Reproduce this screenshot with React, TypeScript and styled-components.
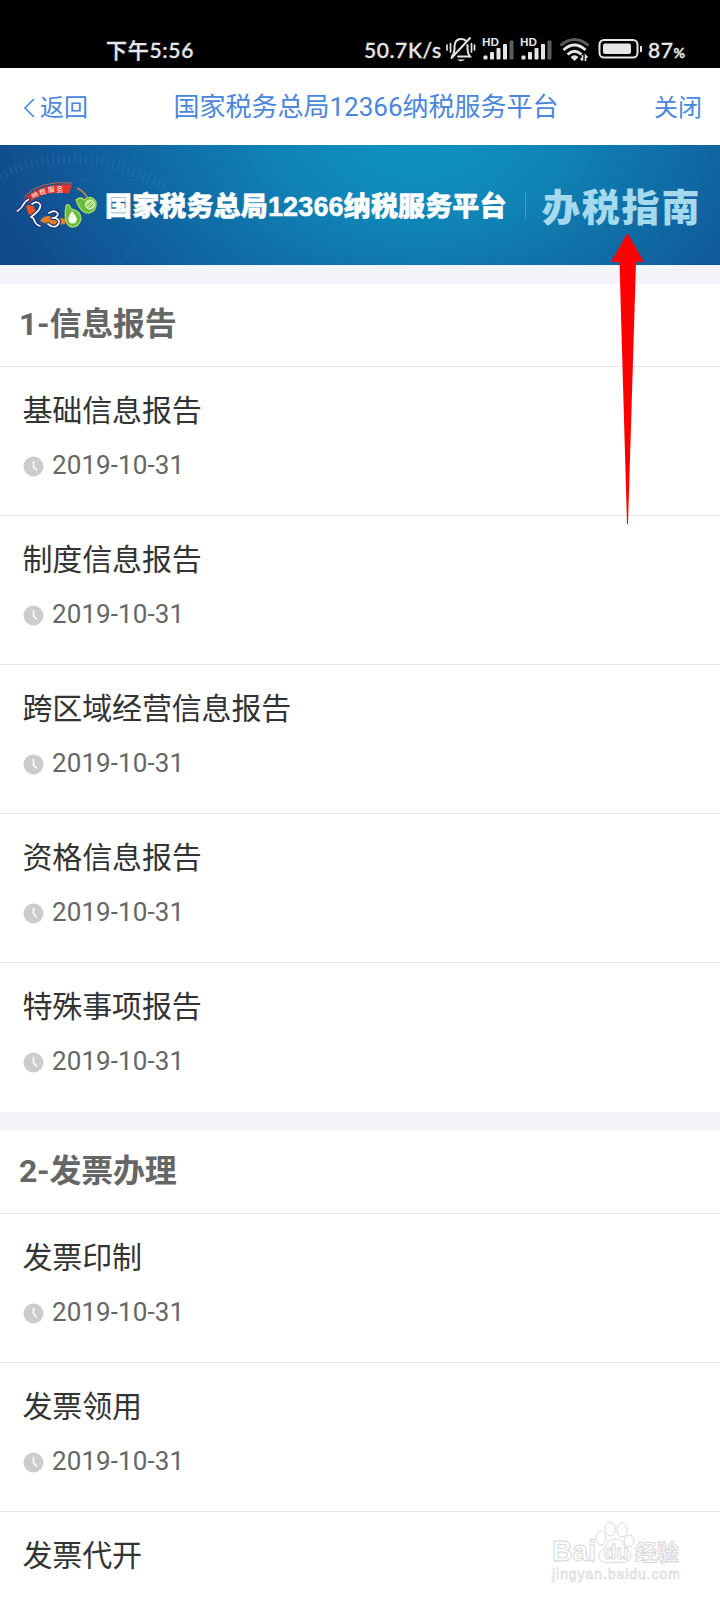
import React from "react";
import styled, { createGlobalStyle } from "styled-components";

const GlobalStyle = createGlobalStyle`
  * { box-sizing: border-box; }
  body { margin: 0; background: #fff; font-family: Roboto, "Noto Sans CJK SC", sans-serif; }
`;

const Screen = styled.div`
  position: relative;
  width: 720px;
  height: 1600px;
  overflow: hidden;
  background: #fff;
`;

const StatusBar = styled.header`
  display: flex;
  align-items: center;
  height: 68px;
  padding: 32px 35px 0 106px;
  background: #000;
  color: #e6e6e6;
  font-family: Lato, "Noto Sans CJK SC", sans-serif;
  font-size: 21px;
  white-space: nowrap;
  -webkit-text-stroke: 0.35px #e6e6e6;
`;

const Clock = styled.span`
  flex: 1;
  margin-top: -2px;
  letter-spacing: 0.7px;
  font-weight: 500;
`;

const Speed = styled.span`
  width: 82px;
  margin-top: -2px;
  font-weight: 500;
  letter-spacing: 0.6px;
`;

const Battery = styled.span`
  width: 37px;
  margin-top: -2px;
  font-weight: 500;
  letter-spacing: 0.5px;
  small { font-size: 14px; font-weight: 700; }
`;

const StatusIcons = styled.svg`
  display: block;
  width: 202px;
  height: 30px;
  flex: none;
  margin-top: 2px;
  -webkit-text-stroke: 0;
`;

const NavBar = styled.nav`
  display: flex;
  justify-content: space-between;
  align-items: center;
  height: 77px;
  padding: 0 18px 0 23px;
  color: #4a86dc;
  font-size: 24px;
  white-space: nowrap;
`;

const NavAction = styled.button`
  display: flex;
  align-items: center;
  gap: 5px;
  padding: 3px 0 0;
  border: 0;
  background: none;
  color: inherit;
  font: inherit;
  line-height: 36px;
`;

const NavTitle = styled.h1`
  margin: 1px 10px 0 0;
  font-size: 26px;
  font-weight: 400;
  line-height: 40px;
`;

const Banner = styled.section`
  position: relative;
  display: flex;
  align-items: center;
  height: 120px;
  padding-left: 14px;
  overflow: hidden;
  white-space: nowrap;
  background: radial-gradient(ellipse 450px 310px at 420px -20px, #0e95c2 0%, #0f84b6 32%, #106aa4 60%, #11488b 100%);
`;

const BannerRings = styled.svg`
  position: absolute;
  inset: 0;
  width: 720px;
  height: 120px;
`;

const BannerLogo = styled.svg`
  position: relative;
  flex: none;
  width: 91px;
  height: 60px;
`;

const BannerName = styled.div`
  position: relative;
  width: 402px;
  margin-top: 3px;
  color: #fff;
  font-family: "Liberation Sans", "Noto Sans CJK SC", sans-serif;
  font-size: 27px;
  font-weight: 900;
  line-height: 40px;
  letter-spacing: 0.15px;
  -webkit-text-stroke: 0.5px #fff;
`;

const BannerDivider = styled.div`
  width: 1px;
  height: 28px;
  margin: 0 16px 0 18px;
  background: #3d9cc8;
`;

const BannerTopic = styled.div`
  position: relative;
  color: #a5d9ee;
  font-family: "Noto Sans CJK SC", sans-serif;
  font-size: 38px;
  font-weight: 900;
  line-height: 56px;
  letter-spacing: 1.8px;
`;

const Group = styled.section`
  padding-bottom: 1px;
  border-top: 19px solid #f4f5fb;
`;

const GroupTitle = styled.h2`
  height: 82px;
  margin: 0;
  padding-left: 19px;
  color: #666;
  font-size: 32px;
  font-weight: 700;
  line-height: 80px;
  letter-spacing: -0.25px;
`;

const Entry = styled.article`
  height: 149px;
  padding: 21px 23px 0;
  border-top: 1px solid #e4e6e7;
`;

const EntryTitle = styled.h3`
  margin: 0 0 0 -0.5px;
  color: #333;
  font-size: 30px;
  font-weight: 400;
  line-height: 46px;
  letter-spacing: -0.15px;
`;

const EntryDate = styled.div`
  display: flex;
  align-items: center;
  gap: 8px;
  height: 40px;
  margin-top: 11px;
  color: #666;
  font-size: 26px;
  letter-spacing: 0.08px;

  svg { margin-top: 3px; }
`;

const Arrow = styled.svg`
  position: absolute;
  left: 610px;
  top: 232px;
  width: 36px;
  height: 294px;
`;

const Watermark = styled.svg`
  position: absolute;
  left: 548px;
  top: 1518px;
  width: 140px;
  height: 70px;
`;

const DATE = "2019-10-31";

const groups: { title: string; entries: { name: string; date?: string }[] }[] = [
  {
    title: "1-信息报告",
    entries: [
      { name: "基础信息报告", date: DATE },
      { name: "制度信息报告", date: DATE },
      { name: "跨区域经营信息报告", date: DATE },
      { name: "资格信息报告", date: DATE },
      { name: "特殊事项报告", date: DATE },
    ],
  },
  {
    title: "2-发票办理",
    entries: [
      { name: "发票印制", date: DATE },
      { name: "发票领用", date: DATE },
      { name: "发票代开" },
    ],
  },
];

function Signal({ x }: { x: number }) {
  return (
    <g transform={`translate(${x} 0)`} fill="#e6e6e6">
      <text x="0" y="10" fontSize="11" fontWeight="900" fontFamily="Lato, sans-serif">HD</text>
      <rect x="1.500" y="19.500" width="4" height="4" rx="1" />
      <rect x="8" y="16" width="4" height="7.500" rx="1" />
      <rect x="14.500" y="12" width="4" height="11.500" rx="1" />
      <rect x="21" y="8" width="4" height="15.500" rx="1" />
      <rect x="27.500" y="4.500" width="4" height="19" rx="1" fill="#5c5c5c" />
    </g>
  );
}

function StatusGlyphs() {
  return (
    <StatusIcons viewBox="0 0 202 30">
      <g fill="none" stroke="#e6e6e6" strokeWidth="2" strokeLinecap="round">
        <path d="M6 20.500 Q8.500 17.500 8.500 13 V10 Q9 3 15 3 Q18 3 19.500 4.500 M21.500 9 V13 Q21.500 17.500 24 20.500 H12" />
        <path d="M5.500 22 L24 2" />
        <path d="M1 9 V14 M4.500 7.500 V16 M25.500 7.500 V16 M28.500 9 V14" strokeWidth="1.700" />
      </g>
      <path d="M11 23.500 H19 Q15 27 11 23.500" fill="#e6e6e6" />
      <Signal x={36} />
      <Signal x={74} />
      <g fill="none" strokeWidth="2.900" stroke="#e6e6e6">
        <path d="M114.500 9.500 Q128.500 -2.500 142.500 9.500" stroke="#5c5c5c" />
        <path d="M117.500 14 Q128.500 4 139.500 14" />
        <path d="M121.500 18.500 Q128.500 12 135.500 18.500" />
      </g>
      <path d="M124.500 21 Q128.500 17.500 132.500 21 L128.500 25 Z" fill="#e6e6e6" />
      <path d="M136.500 19 V24.500 M134.500 22.500 L136.500 24.500 M139.500 25 V19.500 L141.500 21.500" fill="none" stroke="#e6e6e6" strokeWidth="1.600" />
      <rect x="153.500" y="4" width="38" height="17.500" rx="4.500" fill="none" stroke="#e6e6e6" strokeWidth="2" />
      <rect x="157" y="7.500" width="28" height="10.500" rx="2" fill="#e6e6e6" />
      <path d="M195 10 V16" stroke="#e6e6e6" strokeWidth="2" />
    </StatusIcons>
  );
}

function ServiceLogo() {
  const figures =
    "M17.500 211 Q22 208 23 205 Q25 201 28.500 199.500 M32 204 Q38 200 40.500 205 Q41 210 31 217 Q34 218 34.500 221 Q36 225 40 226 M49 213 Q56 209 58 214 Q57 218 52 218 Q60 218 59 223 Q55 230 48 224";
  return (
    <BannerLogo viewBox="14 175 91 60">
      <path d="M23 201 Q36 183 72 184.500 L69 193.500 Q42 190 29 203 Z" fill="#e5342c" />
      <path d="M24 197 Q39 180 72 183" fill="none" stroke="#dc6530" strokeWidth="0.900" />
      <path d="M77 188 Q85 192 88 199" fill="none" stroke="#bd8b48" strokeWidth="1.500" />
      <path d="M26 206 L32 204 L37 213 L29 215 Z" fill="#ee5226" />
      <path d="M40 221 Q44 214 54 217 L66 219 L65 224 Q50 227 40 221 Z" fill="#df7f2a" />
      <g fill="none" strokeLinecap="round" strokeLinejoin="round">
        <path d={figures} stroke="#172f70" strokeWidth="3.800" />
        <path d={figures} stroke="#f3f7ff" strokeWidth="1.700" />
      </g>
      <path d="M66 206 Q69 202.500 71 209 Q81 211 81 219 Q79 227 72 227 Q63 225 66 206 Z" fill="#6abb3d" stroke="#a8d969" strokeWidth="1.300" />
      <path d="M72 211 Q66 219 70 223 Q76 225 77 219 Q75 214 72 211" fill="#f3ffe9" />
      <path d="M76 200 Q81 196 84 200 Q91 194 96 202 Q97 211 89 213 Q81 214 76 200 Z" fill="#6abb3d" stroke="#a8d969" strokeWidth="1.300" />
      <circle cx="90" cy="204.500" r="4.500" fill="#b9e391" stroke="#effbdd" />
      <path d="M87 206 L91.500 201.500 M89 208 L93.500 203.500" stroke="#6abb3d" strokeWidth="1" />
      <g fill="#fff" fontSize="6.500" fontFamily="Noto Sans CJK SC, sans-serif">
        <text x="31" y="197.500" transform="rotate(-25 34 194)">纳</text>
        <text x="39" y="194.500" transform="rotate(-14 42 191)">税</text>
        <text x="48" y="192" transform="rotate(-6 51 189)">服</text>
        <text x="56.500" y="191.500">务</text>
      </g>
    </BannerLogo>
  );
}

export default function App() {
  return (
    <Screen>
      <GlobalStyle />
      <StatusBar>
        <Clock>下午5:56</Clock>
        <Speed>50.7K/s</Speed>
        <StatusGlyphs />
        <Battery>87<small>%</small></Battery>
      </StatusBar>
      <NavBar>
        <NavAction>
          <svg width="12" height="20" viewBox="0 0 12 20" fill="none" stroke="currentColor" strokeWidth="1.600">
            <path d="M11 1 L2 10 L11 19" />
          </svg>
          返回
        </NavAction>
        <NavTitle>国家税务总局12366纳税服务平台</NavTitle>
        <NavAction>关闭</NavAction>
      </NavBar>
      <Banner>
        <BannerRings viewBox="0 0 720 120" fill="none">
          <path d="M0 31 Q80 -8 165 42" stroke="#72b5dc" strokeOpacity=".13" strokeWidth="9" strokeDasharray="1.500 4" />
          <path d="M0 70 Q70 18 160 40" stroke="#72b5dc" strokeOpacity=".07" />
          <path d="M119 120 L142 92" stroke="#72b5dc" strokeOpacity=".15" />
        </BannerRings>
        <ServiceLogo />
        <BannerName>国家税务总局12366纳税服务平台</BannerName>
        <BannerDivider />
        <BannerTopic>办税指南</BannerTopic>
      </Banner>
      {groups.map((group) => (
        <Group key={group.title}>
          <GroupTitle>{group.title}</GroupTitle>
          {group.entries.map((entry) => (
            <Entry key={entry.name}>
              <EntryTitle>{entry.name}</EntryTitle>
              {entry.date && (
                <EntryDate>
                  <svg width="21" height="21" viewBox="0 0 21 21" fill="none">
                    <circle cx="10.500" cy="10.500" r="10" fill="#ccc" />
                    <path d="M10.500 5 V11 L14 14.500" stroke="#fff" strokeWidth="1.500" />
                  </svg>
                  {entry.date}
                </EntryDate>
              )}
            </Entry>
          ))}
        </Group>
      ))}
      <Arrow viewBox="0 0 36 294">
        <path d="M17.500 1 L34 30 H26 L18 292 H17 L9.500 30 H1 Z" fill="#f00" />
      </Arrow>
      <Watermark viewBox="0 0 140 70" fill="#fff" stroke="#d4d4d4" strokeWidth="0.900">
        <g fontFamily="Liberation Sans, sans-serif">
          <text x="4" y="43" fontSize="29" fontWeight="700" textLength="44" lengthAdjust="spacingAndGlyphs">Bai</text>
          <ellipse cx="53" cy="20" rx="5" ry="7" />
          <ellipse cx="62" cy="11" rx="5" ry="7" />
          <ellipse cx="74" cy="12" rx="5" ry="7" />
          <ellipse cx="81" cy="23" rx="5" ry="6" />
          <path d="M67 21 Q73 20 77 29 Q85 36 82 41 Q79 46 67 44 Q54 47 51 40 Q50 34 57 29 Q61 21 67 21 Z" />
          <text x="56" y="41" fontSize="20" fontWeight="700">du</text>
          <text x="4" y="61" fontSize="14" textLength="128" strokeWidth="0.600">jingyan.baidu.com</text>
        </g>
        <text x="87" y="42" fontSize="22" fontWeight="700" fontFamily="Noto Sans CJK SC, sans-serif">经验</text>
      </Watermark>
    </Screen>
  );
}
